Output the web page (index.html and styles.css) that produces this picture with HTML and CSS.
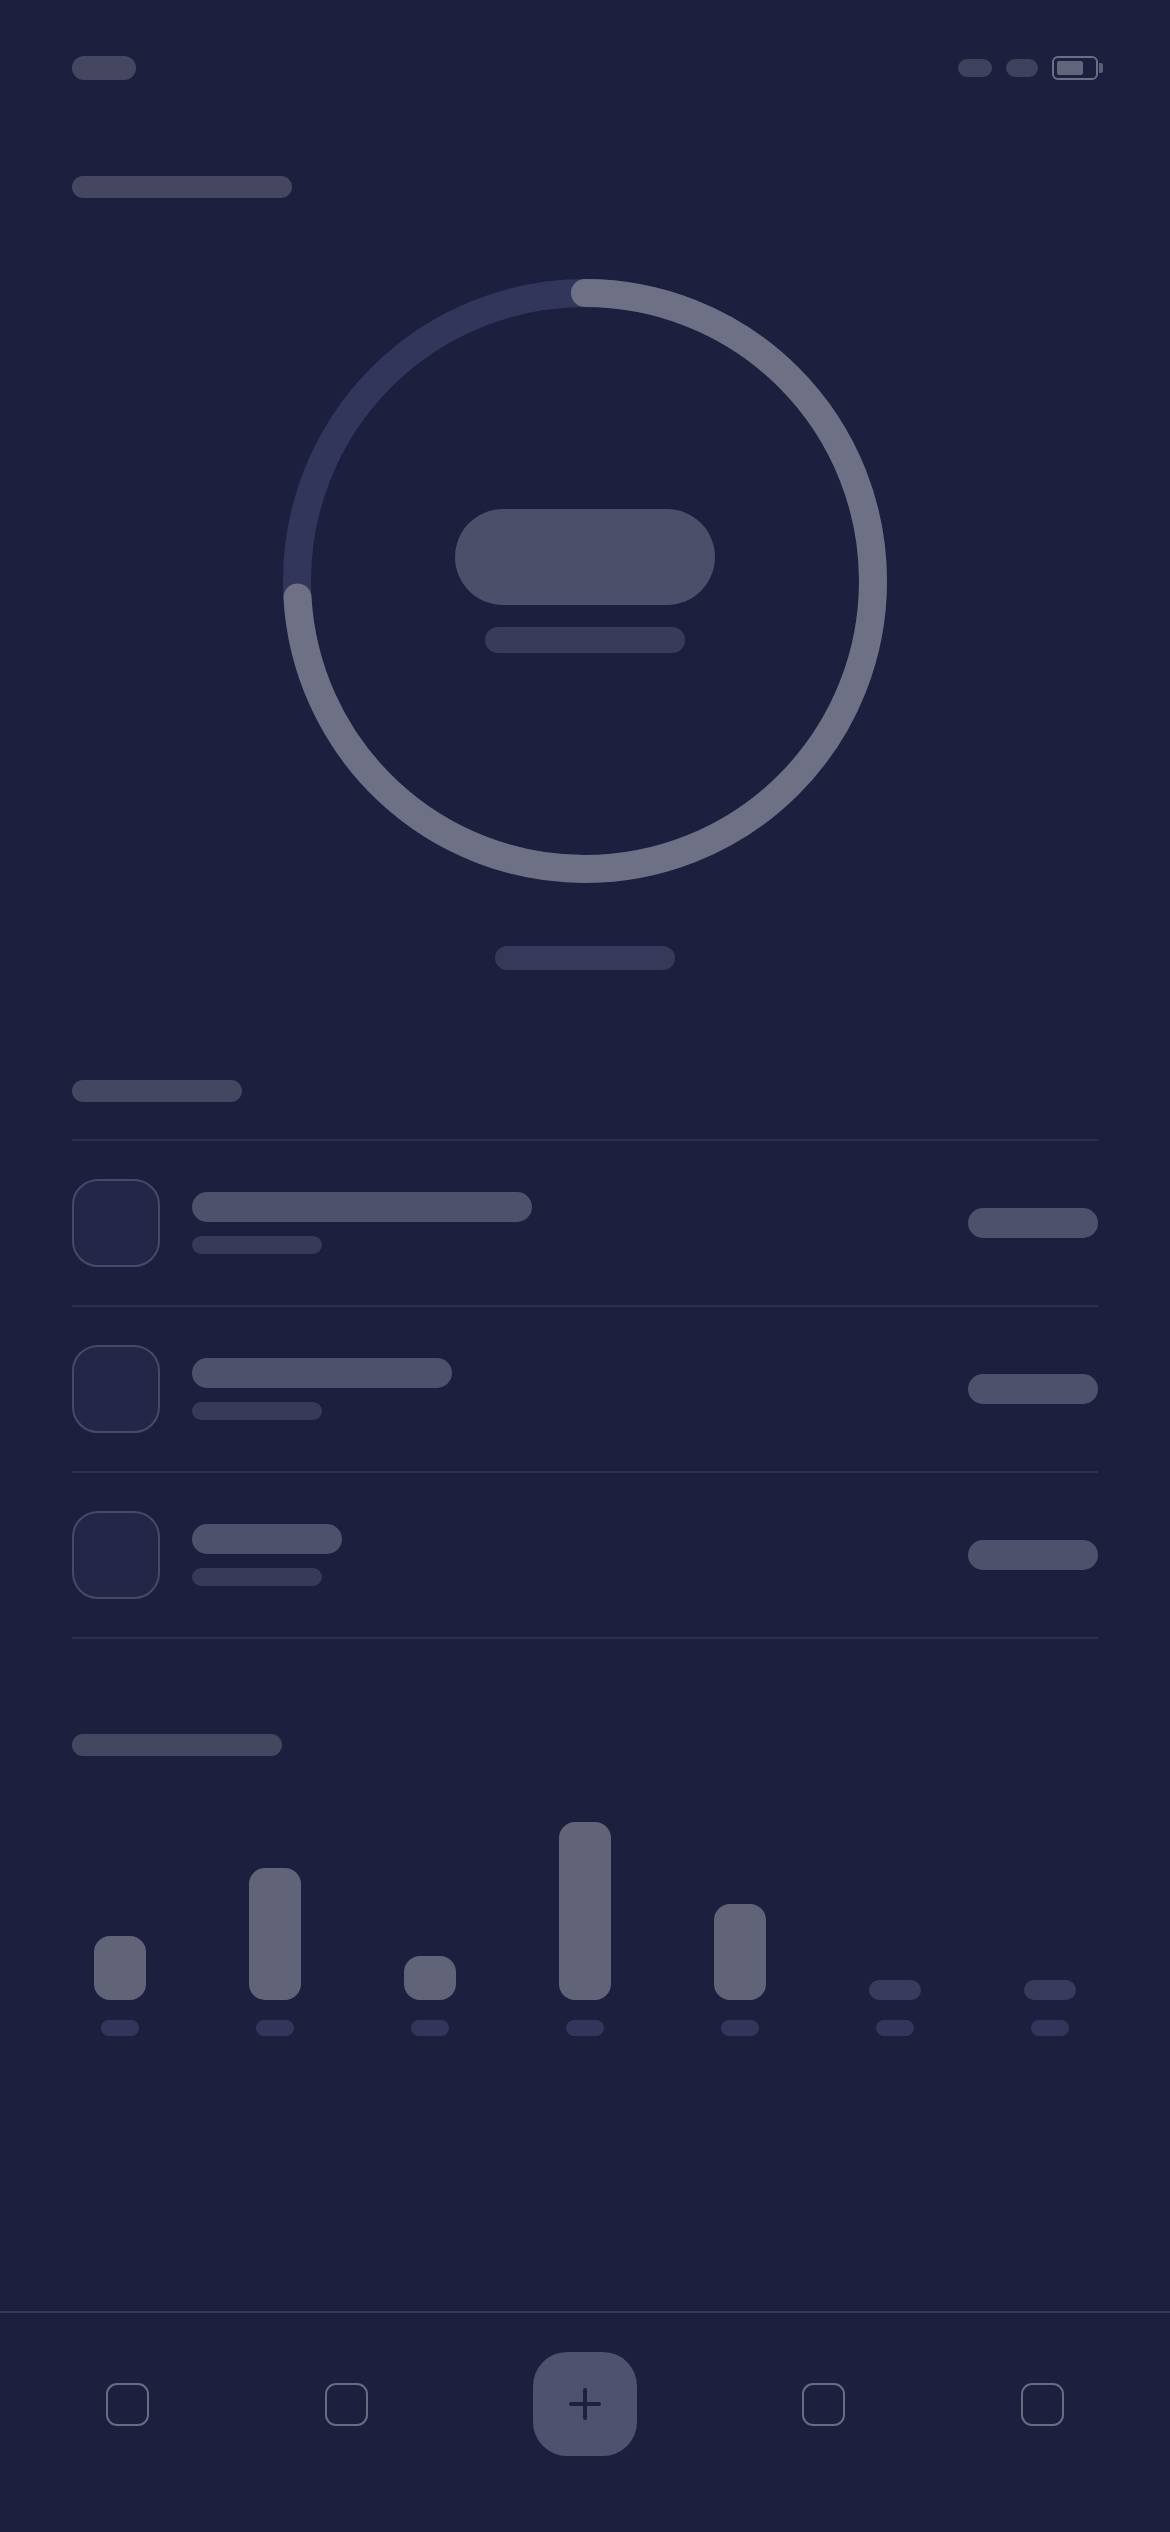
FILE: index.html
```html
<!DOCTYPE html>
<html lang="en">
<head>
<meta charset="utf-8">
<title>Progress</title>
<link rel="stylesheet" href="styles.css">
</head>
<body>
<div class="page">
  <main class="main">
    <header class="status">
      <span class="status-time"></span>
      <div class="status-right">
        <span class="status-dot"></span>
        <span class="status-dot"></span>
        <span class="battery"><span class="battery-fill"></span></span>
        <span class="battery-cap"></span>
      </div>
    </header>

    <div class="page-title"></div>

    <section class="ring-wrap">
      <div class="ring">
        <svg class="ring-svg" width="604" height="604" viewBox="0 0 604 604">
          <circle cx="302" cy="302" r="288" fill="none" stroke="#32365a" stroke-width="28"/>
          <circle cx="302" cy="302" r="288" fill="none" stroke="#6e7085" stroke-width="28" stroke-linecap="round" stroke-dasharray="1340 1810" transform="rotate(-90 302 302)"/>
        </svg>
        <div class="ring-center">
          <div class="ring-value"></div>
          <div class="ring-label"></div>
        </div>
      </div>
      <div class="ring-caption"></div>
    </section>

    <section class="list-section">
      <div class="section-title list-title"></div>
      <ul class="list">
        <li class="row">
          <span class="row-icon"></span>
          <div class="row-text">
            <span class="row-title w340"></span>
            <span class="row-sub"></span>
          </div>
          <span class="row-amount"></span>
        </li>
        <li class="row">
          <span class="row-icon"></span>
          <div class="row-text">
            <span class="row-title w260"></span>
            <span class="row-sub"></span>
          </div>
          <span class="row-amount"></span>
        </li>
        <li class="row">
          <span class="row-icon"></span>
          <div class="row-text">
            <span class="row-title w150"></span>
            <span class="row-sub"></span>
          </div>
          <span class="row-amount"></span>
        </li>
      </ul>
    </section>

    <section class="chart-section">
      <div class="section-title chart-title"></div>
      <div class="chart">
        <div class="col"><div class="bar-area"><span class="bar" style="height:64px"></span></div><span class="col-label"></span></div>
        <div class="col"><div class="bar-area"><span class="bar" style="height:132px"></span></div><span class="col-label"></span></div>
        <div class="col"><div class="bar-area"><span class="bar" style="height:44px"></span></div><span class="col-label"></span></div>
        <div class="col"><div class="bar-area"><span class="bar" style="height:178px"></span></div><span class="col-label"></span></div>
        <div class="col"><div class="bar-area"><span class="bar" style="height:96px"></span></div><span class="col-label"></span></div>
        <div class="col"><div class="bar-area"><span class="bar bar-empty" style="height:20px"></span></div><span class="col-label"></span></div>
        <div class="col"><div class="bar-area"><span class="bar bar-empty" style="height:20px"></span></div><span class="col-label"></span></div>
      </div>
    </section>
  </main>

  <nav class="tabbar">
    <span class="tab"><span class="tab-icon"></span></span>
    <span class="tab"><span class="tab-icon"></span></span>
    <span class="tab"><span class="tab-add">
      <svg width="32" height="32" viewBox="0 0 32 32"><path d="M16 2 V30 M2 16 H30" stroke="#1d203e" stroke-width="4" stroke-linecap="round" fill="none"/></svg>
    </span></span>
    <span class="tab"><span class="tab-icon"></span></span>
    <span class="tab"><span class="tab-icon"></span></span>
  </nav>
</div>
</body>
</html>
```

FILE: styles.css
```css
* { box-sizing: border-box; }

html, body {
  margin: 0;
  padding: 0;
  background: #1c1f3d;
  font-family: "Inter", "Liberation Sans", sans-serif;
}

.page {
  width: 1170px;
  height: 2532px;
  display: flex;
  flex-direction: column;
  background: #1c1f3d;
}

.main {
  flex: 1;
  padding: 56px 72px 0;
  display: flex;
  flex-direction: column;
}

/* status bar */
.status {
  display: flex;
  justify-content: space-between;
  align-items: center;
  height: 24px;
}
.status-time {
  width: 64px;
  height: 24px;
  border-radius: 12px;
  background: #44475f;
}
.status-right {
  display: flex;
  align-items: center;
  margin-right: -5px;
}
.status-dot {
  width: 34px;
  height: 18px;
  border-radius: 9px;
  background: #3f425c;
  margin-right: 14px;
}
.status-dot + .status-dot { width: 32px; }
.battery {
  width: 46px;
  height: 24px;
  border: 2px solid #6b6e84;
  border-radius: 6px;
  padding: 3px;
  display: flex;
}
.battery-fill {
  width: 26px;
  height: 14px;
  border-radius: 2px;
  background: #62657b;
}
.battery-cap {
  width: 4px;
  height: 10px;
  margin-left: 1px;
  border-radius: 0 2px 2px 0;
  background: #5a5d74;
}

.page-title {
  margin-top: 96px;
  width: 220px;
  height: 22px;
  border-radius: 11px;
  background: #44475f;
}

/* ring */
.ring-wrap {
  display: flex;
  flex-direction: column;
  align-items: center;
  margin-top: 81px;
}
.ring {
  display: grid;
  width: 604px;
  height: 604px;
}
.ring-svg, .ring-center {
  grid-area: 1 / 1;
}
.ring-svg { display: block; }
.ring-center {
  display: flex;
  flex-direction: column;
  align-items: center;
  justify-content: center;
  gap: 22px;
}
.ring-value {
  width: 260px;
  height: 96px;
  border-radius: 48px;
  background: #4c4f6a;
}
.ring-label {
  width: 200px;
  height: 26px;
  border-radius: 13px;
  background: #383b5a;
}
.ring-caption {
  margin-top: 63px;
  width: 180px;
  height: 24px;
  border-radius: 12px;
  background: #363959;
}

/* list */
.section-title {
  height: 22px;
  border-radius: 11px;
  background: #44475f;
}
.list-section { margin-top: 110px; }
.list-title { width: 170px; }
.list {
  list-style: none;
  margin: 37px 0 0;
  padding: 0;
  border-top: 2px solid #2d3050;
}
.row {
  display: flex;
  align-items: center;
  padding: 38px 0;
  border-bottom: 2px solid #2d3050;
}
.row-icon {
  width: 88px;
  height: 88px;
  border-radius: 26px;
  border: 2px solid #474a66;
  background: #232646;
  flex: none;
}
.row-text {
  display: flex;
  flex-direction: column;
  gap: 14px;
  margin-left: 32px;
  flex: 1;
}
.row-title {
  display: block;
  height: 30px;
  border-radius: 15px;
  background: #4e516b;
}
.w340 { width: 340px; }
.w260 { width: 260px; }
.w150 { width: 150px; }
.row-sub {
  display: block;
  width: 130px;
  height: 18px;
  border-radius: 9px;
  background: #373a59;
}
.row-amount {
  width: 130px;
  height: 30px;
  border-radius: 15px;
  background: #4e516b;
}

/* chart */
.chart-section { margin-top: 95px; }
.chart-title { width: 210px; }
.chart {
  display: grid;
  grid-template-columns: repeat(7, 1fr);
  margin: 44px -30px 0;
}
.col {
  display: flex;
  flex-direction: column;
  align-items: center;
}
.bar-area {
  height: 200px;
  display: flex;
  align-items: flex-end;
}
.bar {
  display: block;
  width: 52px;
  border-radius: 16px;
  background: #616478;
}
.bar-empty {
  border-radius: 10px;
  background: #383b5b;
}
.col-label {
  margin-top: 20px;
  width: 38px;
  height: 16px;
  border-radius: 8px;
  background: #33365a;
}

/* tab bar */
.tabbar {
  border-top: 2px solid #363957;
  padding: 39px 0 76px;
  display: grid;
  grid-template-columns: 219px 219px 258px 219px 219px;
  justify-content: center;
  align-items: center;
}
.tab {
  display: flex;
  justify-content: center;
  align-items: center;
}
.tab-icon {
  width: 43px;
  height: 43px;
  border: 2px solid #686b82;
  border-radius: 11px;
}
.tab-add {
  width: 104px;
  height: 104px;
  border-radius: 34px;
  background: #4f526e;
  display: flex;
  align-items: center;
  justify-content: center;
}
.tab-add svg { display: block; }
```
